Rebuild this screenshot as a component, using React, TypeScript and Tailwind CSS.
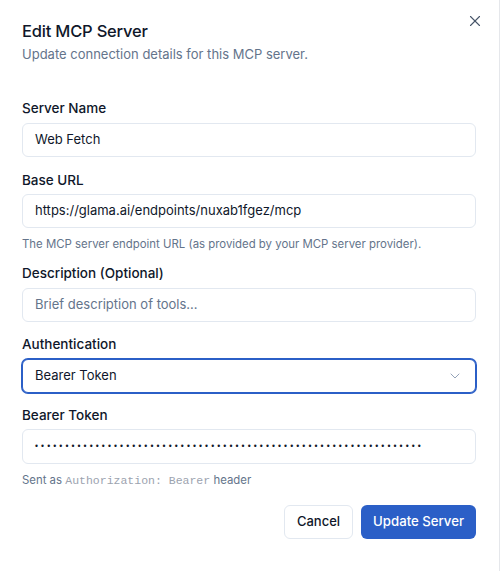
import { X, ChevronDown } from "lucide-react";

const font = { fontFamily: "Inter, 'Noto Sans', sans-serif" };

function Label({ children, className = "" }: { children: React.ReactNode; className?: string }) {
  return <div className={`h-5 text-[13.5px] leading-5 font-medium text-[#0f172a] ${className}`}>{children}</div>;
}

function Field({ children, className = "" }: { children: React.ReactNode; className?: string }) {
  return (
    <div className={`flex h-[34px] items-center rounded-md border border-[#e2e8f0] bg-white px-3 text-[13px] text-[#0f172a] ${className}`}>
      {children}
    </div>
  );
}

export default function App() {
  const dots = "•".repeat(64);
  return (
    <div className="relative h-[571px] w-[500px] border-r border-[#e5e7eb] bg-white pl-[22px] pr-[23px]" style={font}>
      <button className="absolute right-[15px] top-[12px] text-[#475569]">
        <X size={18} strokeWidth={1.5} />
      </button>

      <h2 className="pt-[19px] text-[16.5px] leading-6 font-medium tracking-[-0.2px] text-[#0f172a]">Edit MCP Server</h2>
      <p className="mt-[1px] text-[13px] leading-5 text-[#64748b]">Update connection details for this MCP server.</p>

      <Label className="mt-[34px]">Server Name</Label>
      <Field className="mt-[5px]">Web Fetch</Field>

      <Label className="mt-[13px]">Base URL</Label>
      <Field className="mt-[4px]">https://glama.ai/endpoints/nuxab1fgez/mcp</Field>
      <p className="mt-[8px] text-[11.4px] leading-4 text-[#64748b]">
        The MCP server endpoint URL (as provided by your MCP server provider).
      </p>

      <Label className="mt-[11px]">Description (Optional)</Label>
      <Field className="mt-[5px] text-[#64748b]">Brief description of tools...</Field>

      <Label className="mt-[12px]">Authentication</Label>
      <div className="mt-[5px] flex h-[34px] items-center justify-between rounded-md border border-[#2b5fc7] bg-white px-3 text-[13px] text-[#0f172a] ring-1 ring-[#2b5fc7]">
        <span>Bearer Token</span>
        <ChevronDown size={16} strokeWidth={1.5} className="text-[#94a3b8]" />
      </div>

      <Label className="mt-[12px]">Bearer Token</Label>
      <Field className="mt-[4px] h-[35px]">
        <span className="text-[8.5px] leading-none tracking-[3.1px] text-[#111827]" style={{ fontFamily: "'Liberation Sans', sans-serif" }}>
          {dots}
        </span>
      </Field>
      <p className="mt-[8px] text-[11.4px] leading-4 text-[#64748b]">
        Sent as{" "}
        <span className="text-[11.5px] text-[#9ca3af]" style={{ fontFamily: "'Liberation Mono', monospace" }}>
          Authorization: Bearer
        </span>{" "}
        header
      </p>

      <div className="mt-[16px] flex justify-end gap-2">
        <button className="h-[34px] rounded-md border border-[#e2e8f0] bg-white px-3 text-[13px] font-medium text-[#0f172a]">
          Cancel
        </button>
        <button className="h-[34px] rounded-md bg-[#2b5fc7] px-3 text-[13.2px] font-medium text-white">
          Update Server
        </button>
      </div>
    </div>
  );
}
